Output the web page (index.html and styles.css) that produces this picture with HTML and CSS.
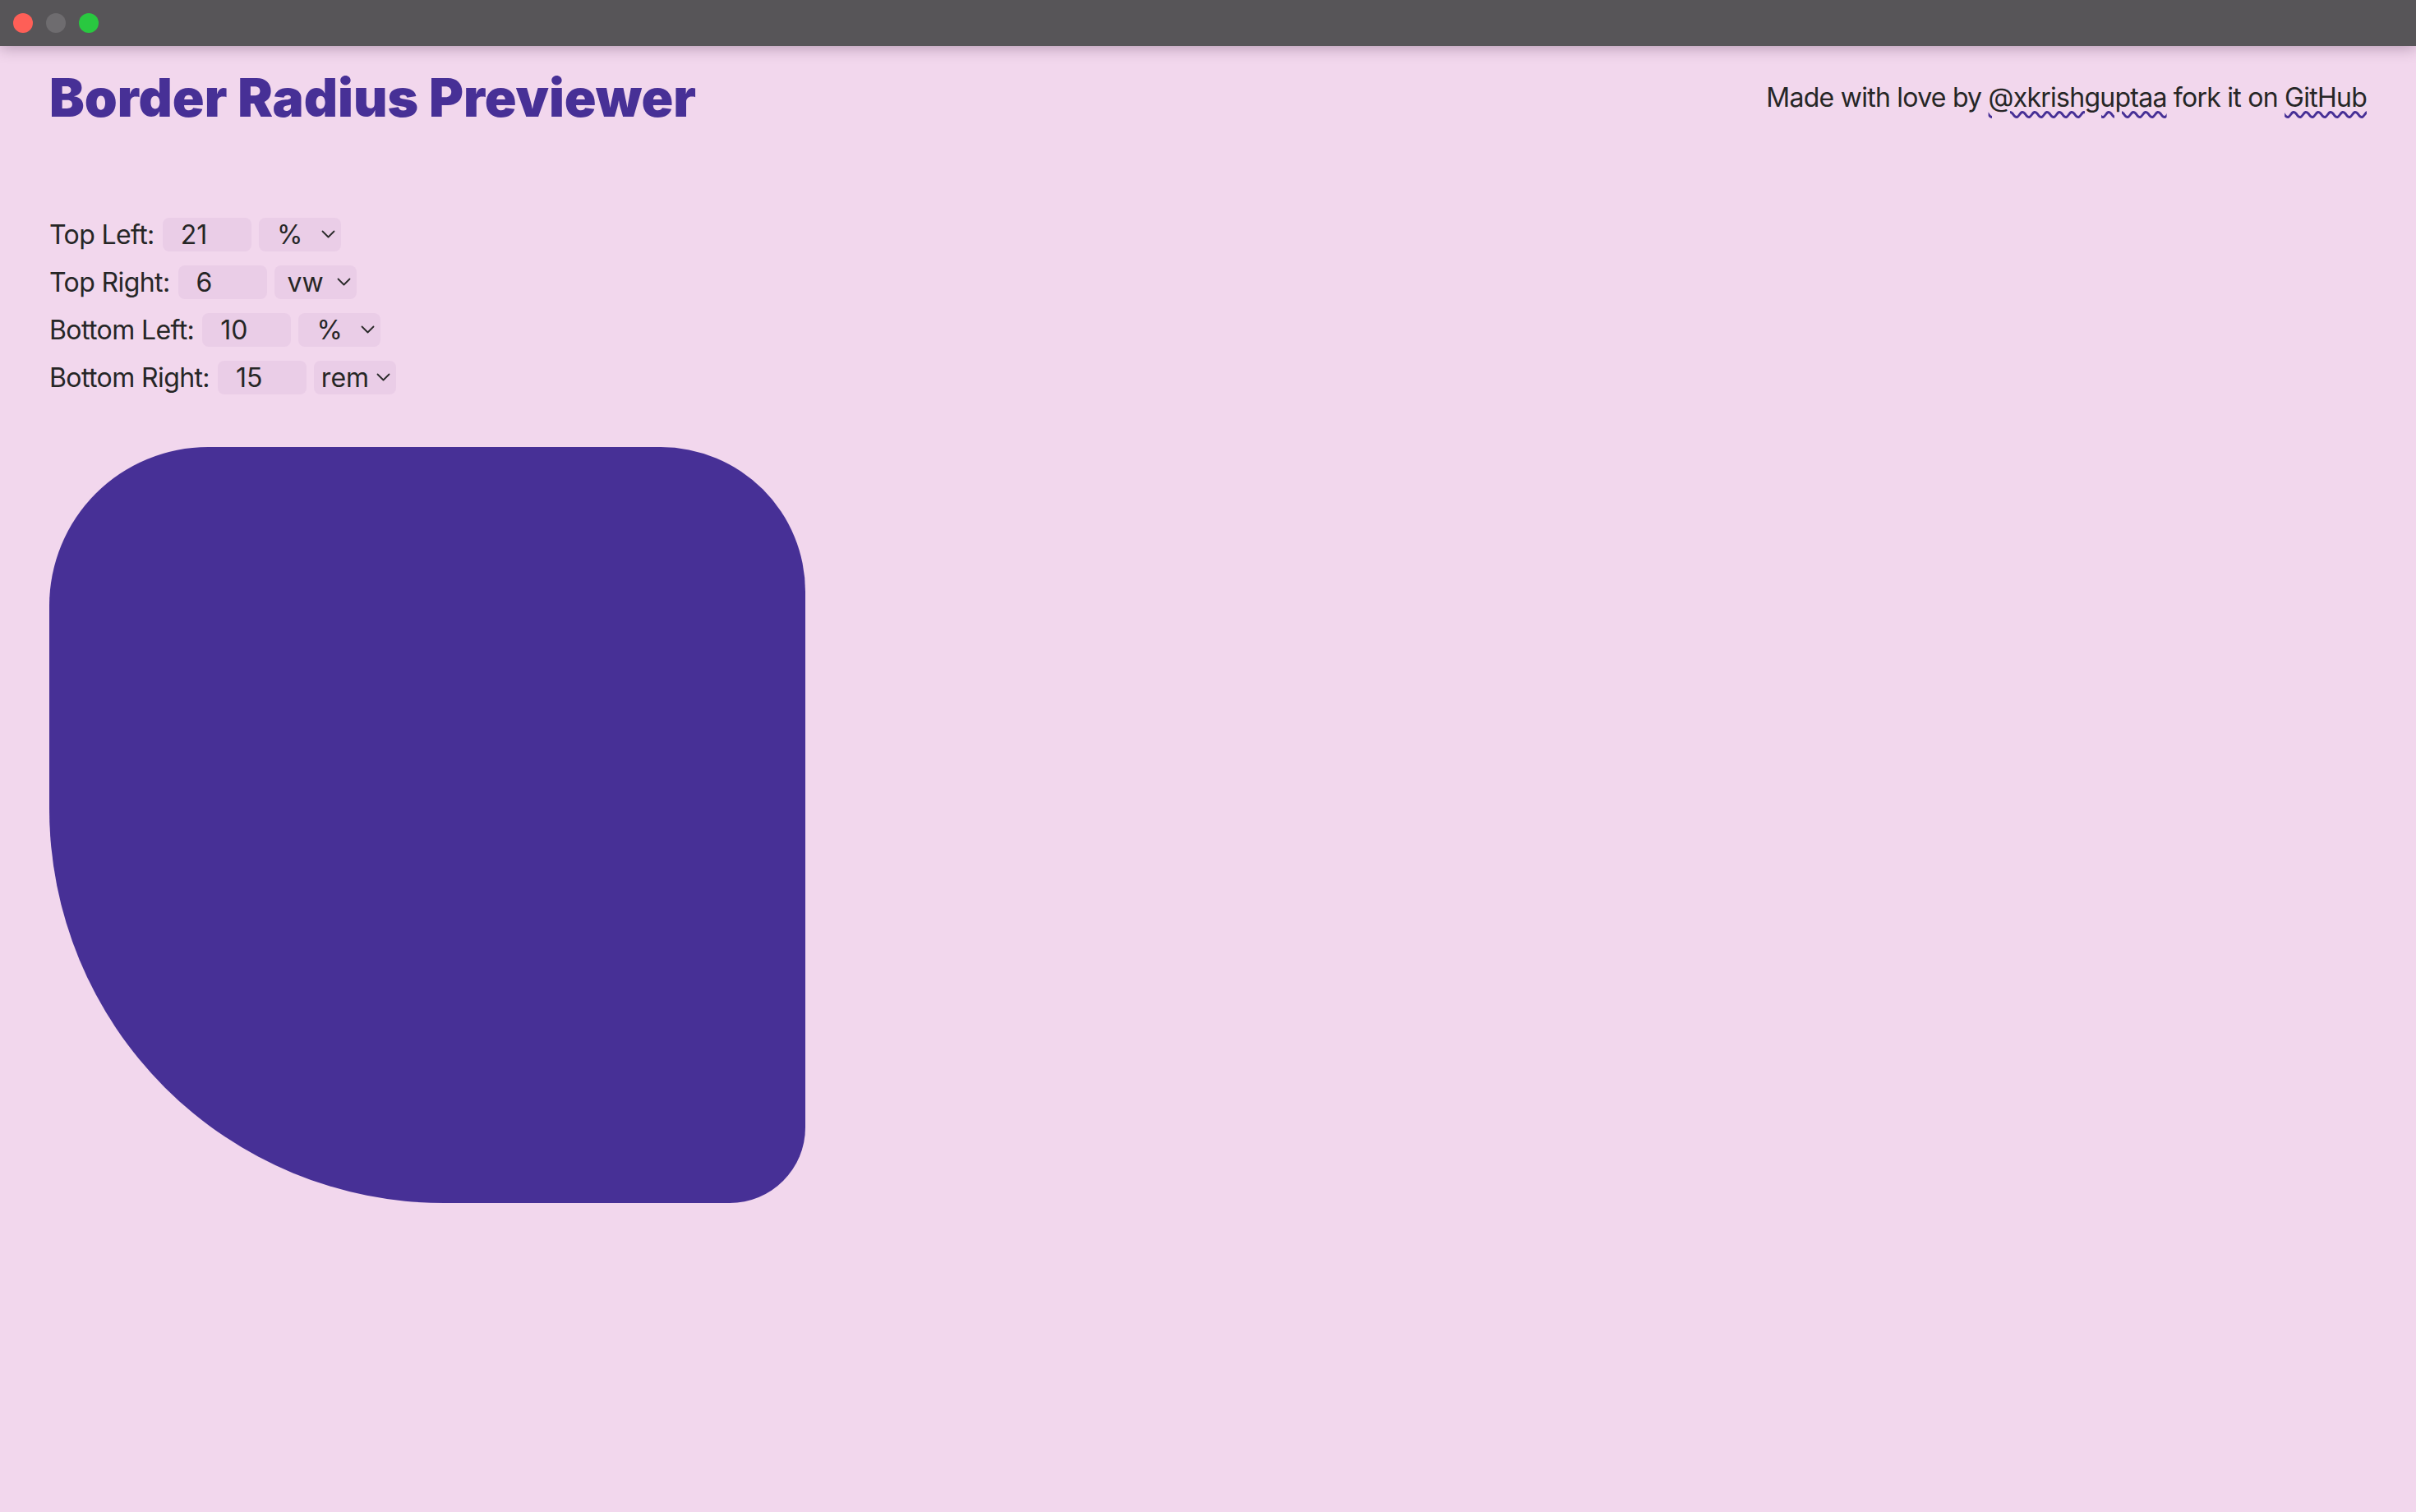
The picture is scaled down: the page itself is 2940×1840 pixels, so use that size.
FILE: index.html
```html
<!DOCTYPE html>
<html lang="en">
<head>
<meta charset="utf-8">
<title>Border Radius Previewer</title>
<link rel="stylesheet" href="styles.css">
</head>
<body>
<div class="titlebar">
  <span class="light light-red"></span>
  <span class="light light-gray"></span>
  <span class="light light-green"></span>
</div>
<main class="page">
  <header class="header">
    <h1 class="title">Border Radius Previewer</h1>
    <p class="credit">Made with love by <a class="link" href="#">@xkrishguptaa</a> fork it on <a class="link" href="#">GitHub</a></p>
  </header>

  <section class="controls">
    <div class="row">
      <label class="label">Top Left:</label>
      <input class="num" type="text" value="21">
      <div class="unit">
        <select class="unit-select"><option>%</option></select>
        <svg class="chev" viewBox="0 0 17 10" width="17" height="10"><path d="M1.5 1.5 L8.5 8.5 L15.5 1.5" fill="none" stroke="#2a2a2a" stroke-width="1.8" stroke-linecap="round" stroke-linejoin="round"/></svg>
      </div>
    </div>
    <div class="row">
      <label class="label">Top Right:</label>
      <input class="num" type="text" value="6">
      <div class="unit">
        <select class="unit-select"><option>vw</option></select>
        <svg class="chev" viewBox="0 0 17 10" width="17" height="10"><path d="M1.5 1.5 L8.5 8.5 L15.5 1.5" fill="none" stroke="#2a2a2a" stroke-width="1.8" stroke-linecap="round" stroke-linejoin="round"/></svg>
      </div>
    </div>
    <div class="row">
      <label class="label">Bottom Left:</label>
      <input class="num" type="text" value="10">
      <div class="unit">
        <select class="unit-select"><option>%</option></select>
        <svg class="chev" viewBox="0 0 17 10" width="17" height="10"><path d="M1.5 1.5 L8.5 8.5 L15.5 1.5" fill="none" stroke="#2a2a2a" stroke-width="1.8" stroke-linecap="round" stroke-linejoin="round"/></svg>
      </div>
    </div>
    <div class="row">
      <label class="label">Bottom Right:</label>
      <input class="num" type="text" value="15">
      <div class="unit">
        <select class="unit-select"><option>rem</option></select>
        <svg class="chev" viewBox="0 0 17 10" width="17" height="10"><path d="M1.5 1.5 L8.5 8.5 L15.5 1.5" fill="none" stroke="#2a2a2a" stroke-width="1.8" stroke-linecap="round" stroke-linejoin="round"/></svg>
      </div>
    </div>
  </section>

  <div class="preview"></div>
</main>
</body>
</html>
```
FILE: styles.css
```css
html, body {
  margin: 0;
  padding: 0;
}

body {
  background: #f2d7ed;
  font-family: Inter, "Noto Sans", "Liberation Sans", sans-serif;
  color: #262626;
  min-height: 1840px;
}

.titlebar {
  position: relative;
  z-index: 2;
  height: 56px;
  background: #575558;
  display: flex;
  align-items: center;
  gap: 16px;
  padding-left: 16px;
  box-shadow: 0 2px 18px rgba(60, 30, 60, 0.35);
}

.light {
  width: 24px;
  height: 24px;
  border-radius: 50%;
  display: block;
}

.light-red { background: #fe5f57; }
.light-gray { background: #6e6c6f; }
.light-green { background: #29c840; }

.page {
  padding: 24px 60px 0 60px;
}

.header {
  display: flex;
  align-items: center;
  justify-content: space-between;
}

.title {
  margin: 0;
  font-family: Inter, "Noto Sans", sans-serif;
  font-size: 64px;
  font-weight: 900;
  line-height: 77px;
  letter-spacing: 0;
  color: #473096;
}

.credit {
  margin: 0;
  font-size: 32px;
  line-height: 39px;
  letter-spacing: -0.75px;
  color: #262626;
}

.link {
  color: inherit;
  text-decoration: underline wavy #473096;
  text-decoration-thickness: 3px;
  text-underline-offset: 5px;
}

.controls {
  margin-top: 108px;
  display: flex;
  flex-direction: column;
  gap: 17px;
}

.row {
  display: flex;
  align-items: center;
  gap: 10px;
  height: 41px;
}

.label {
  font-size: 32px;
  letter-spacing: -0.6px;
  color: #262626;
}

.num {
  box-sizing: border-box;
  width: 108px;
  height: 41px;
  border: none;
  border-radius: 8px;
  background: #eacde7;
  padding: 0 0 0 22px;
  font-family: inherit;
  font-size: 32px;
  color: #262626;
  outline: none;
}

.unit {
  position: relative;
  width: 100px;
  height: 41px;
  margin-left: -1px;
}

.unit-select {
  -webkit-appearance: none;
  appearance: none;
  box-sizing: border-box;
  width: 100%;
  height: 100%;
  border: none;
  border-radius: 8px;
  background: #eacde7;
  padding: 0 24px 0 0;
  font-family: inherit;
  font-size: 32px;
  color: #262626;
  text-align: center;
  text-align-last: center;
  outline: none;
}

.chev {
  position: absolute;
  right: 7px;
  top: 15px;
  pointer-events: none;
}

.preview {
  margin-top: 64px;
  width: 920px;
  height: 920px;
  background: #473096;
  border-radius: 21% 176px 10% 480px;
}
```
